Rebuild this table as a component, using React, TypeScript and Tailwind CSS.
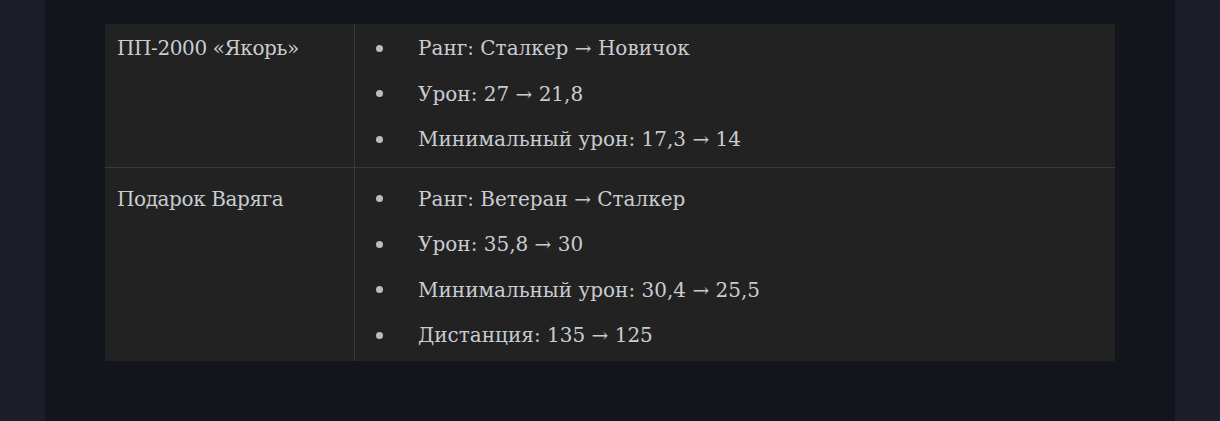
import React from "react";

const rows = [
  {
    name: "ПП-2000 «Якорь»",
    items: ["Ранг: Сталкер → Новичок", "Урон: 27 → 21,8", "Минимальный урон: 17,3 → 14"],
    pad: "pt-[1.5px] pb-[4.5px]",
  },
  {
    name: "Подарок Варяга",
    items: [
      "Ранг: Ветеран → Сталкер",
      "Урон: 35,8 → 30",
      "Минимальный урон: 30,4 → 25,5",
      "Дистанция: 135 → 125",
    ],
    pad: "pt-[8.5px] pb-[2.5px]",
  },
];

export default function App() {
  return (
    <div className="min-h-screen bg-[#1c1e29] flex justify-center" style={{ fontFamily: '"DejaVu Serif", serif' }}>
      <div className="w-[1130px] h-[421px] bg-[#13151d] pt-6 px-[60px]">
        <div className="bg-[#222222] w-[1010px]">
          {rows.map((row, i) => (
            <div key={i} className={`flex ${i > 0 ? "border-t border-[#3a3a3a]" : ""}`}>
              <div className={`w-[250px] border-r border-[#3a3a3a] pl-3 ${row.pad}`}>
                <div className="h-[45.5px] flex items-center text-[20px] tracking-[-0.4px] text-[#c9ccd0]">{row.name}</div>
              </div>
              <ul className={`flex-1 ${row.pad}`}>
                {row.items.map((it) => (
                  <li key={it} className="h-[45.5px] flex items-center text-[20px] text-[#c9ccd0]">
                    <span className="ml-[21px] w-[7px] h-[7px] rounded-full bg-[#bdbdbd]" />
                    <span className="ml-[35px]">{it}</span>
                  </li>
                ))}
              </ul>
            </div>
          ))}
        </div>
      </div>
    </div>
  );
}
